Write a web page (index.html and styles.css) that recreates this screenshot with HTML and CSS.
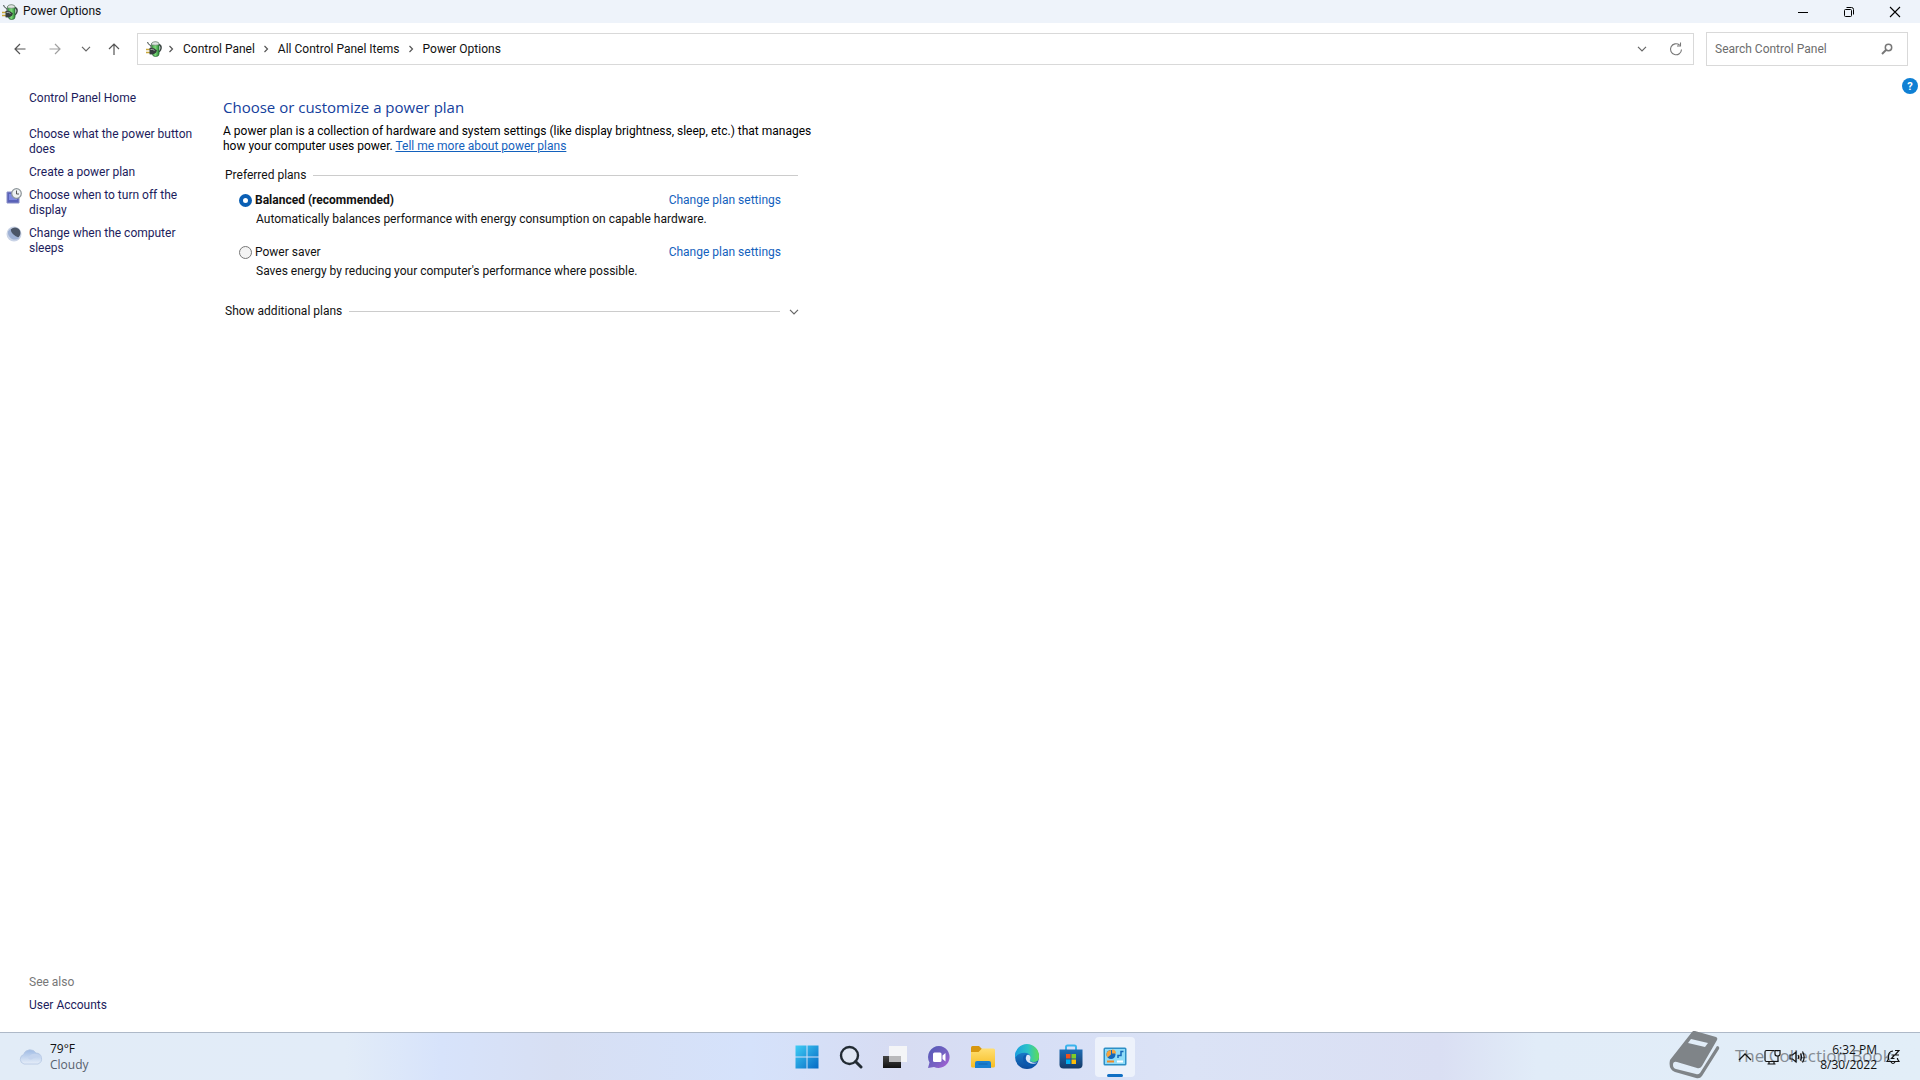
FILE: index.html
```html
<!DOCTYPE html>
<html lang="en">
<head>
<meta charset="utf-8">
<title>Power Options</title>
<link rel="stylesheet" href="styles.css">
</head>
<body>
<svg class="defs" aria-hidden="true">
  <defs>
    <linearGradient id="bat" x1="0" x2="1"><stop offset="0" stop-color="#3c9a40"/><stop offset=".5" stop-color="#7edc7a"/><stop offset="1" stop-color="#2a8a36"/></linearGradient>
    <linearGradient id="win" x1="0" y1="0" x2="1" y2="1"><stop offset="0" stop-color="#3fcdf5"/><stop offset="1" stop-color="#0669c4"/></linearGradient>
    <linearGradient id="chat" x1="0" y1="0" x2="1" y2="1"><stop offset="0" stop-color="#5059b5"/><stop offset=".6" stop-color="#7a62c4"/><stop offset="1" stop-color="#b05fd8"/></linearGradient>
    <linearGradient id="fold" x1="0" y1="0" x2="0" y2="1"><stop offset="0" stop-color="#ffdf73"/><stop offset="1" stop-color="#f7bd22"/></linearGradient>
    <linearGradient id="edge1" x1="0" y1="0" x2="1" y2="0"><stop offset="0" stop-color="#199fe0"/><stop offset=".55" stop-color="#2cc4c6"/><stop offset="1" stop-color="#5fdc56"/></linearGradient>
    <linearGradient id="edge2" x1="0" y1="0" x2="0" y2="1"><stop offset="0" stop-color="#1c8fdc"/><stop offset="1" stop-color="#0c4b9c"/></linearGradient>
    <linearGradient id="store" x1="0" y1="0" x2="0" y2="1"><stop offset="0" stop-color="#1d6db5"/><stop offset="1" stop-color="#153a68"/></linearGradient>
    <linearGradient id="cloud" x1="0" y1="0" x2="0" y2="1"><stop offset="0" stop-color="#9fbbe4"/><stop offset="1" stop-color="#e6eef9"/></linearGradient>
    <linearGradient id="dark" x1="0" y1="0" x2="0" y2="1"><stop offset="0" stop-color="#444"/><stop offset="1" stop-color="#111"/></linearGradient>
    <symbol id="power" viewBox="0 0 16 16">
      <path d="M12.500 3.500Q15.500 4 15 7.500Q14.500 11 10 12" fill="none" stroke="#3d4745" stroke-width="1.500"/>
      <path d="M5.500 3 Q5.500 1 9.500 1 Q13 1 13 3 V13 Q13 15.500 9.500 15.500 Q6.500 15.500 6.500 13Z" fill="url(#bat)" stroke="#2f6a3a" stroke-width=".8"/>
      <path d="M5.500 3Q5.500 .8 9.300 .8Q13 .8 13 3Q13 4.200 9.300 4.200Q5.500 4.200 5.500 3Z" fill="#dfe6e2" stroke="#6b7772" stroke-width=".6"/>
      <path d="M1.500 1Q2 3.500 4.500 4.500Q5.500 5.500 5 7" fill="none" stroke="#5c6663" stroke-width="1.200"/>
      <path d="M0 8.500H4M0 11.500H4" stroke="#c8a83c" stroke-width="1.300"/>
      <path d="M3.500 7 Q8 6 11 9.500 Q9.500 14 3.500 13.300Z" fill="#363e3e"/>
      <path d="M4.500 8.500Q7 7.800 8.500 9.500" stroke="#a4afaa" fill="none"/>
    </symbol>
    <symbol id="crumb" viewBox="0 0 6 8"><path d="M1.500 1 L4.500 4 L1.500 7" fill="none" stroke="#555" stroke-width="1.200"/></symbol>
    <symbol id="down" viewBox="0 0 10 6"><path d="M1 .8 L5 4.800 L9 .8" fill="none" stroke="currentColor" stroke-width="1.200"/></symbol>
  </defs>
</svg>
<div class="screen">
  <header class="titlebar">
    <svg class="ico16"><use href="#power"/></svg>
    <span class="title">Power Options</span>
    <button class="winbtn" aria-label="Minimize"><svg width="12" height="12"><path d="M1 6.500H11" stroke="#000" /></svg></button>
    <button class="winbtn" aria-label="Restore"><svg width="12" height="12" fill="none" stroke="#000"><rect x="1.500" y="3.500" width="7" height="7" rx="1"/><path d="M3.500 1.500H8.500Q10.500 1.500 10.500 3.500V8.500"/></svg></button>
    <button class="winbtn" aria-label="Close"><svg width="12" height="12"><path d="M1 1L11 11M11 1L1 11" stroke="#000" stroke-width="1.100"/></svg></button>
  </header>

  <nav class="toolbar" aria-label="Navigation">
    <div class="history">
      <button aria-label="Back"><svg width="12" height="12" fill="none" stroke="#555" stroke-width="1.200"><path d="M11.500 6H1M6 1L1 6L6 11"/></svg></button>
      <button aria-label="Forward"><svg width="12" height="12" fill="none" stroke="#a0a0a0" stroke-width="1.200"><path d="M.5 6H11M6 1L11 6L6 11"/></svg></button>
      <button class="narrow" aria-label="Recent locations"><svg class="chev"><use href="#down"/></svg></button>
      <button class="up" aria-label="Up"><svg width="12" height="12" fill="none" stroke="#555" stroke-width="1.200"><path d="M6 12V1M1 6L6 1L11 6"/></svg></button>
    </div>
    <div class="address">
      <svg class="ico16"><use href="#power"/></svg>
      <svg class="crumb"><use href="#crumb"/></svg>
      <a href="#">Control Panel</a>
      <svg class="crumb"><use href="#crumb"/></svg>
      <a href="#">All Control Panel Items</a>
      <svg class="crumb"><use href="#crumb"/></svg>
      <a href="#">Power Options</a>
      <button class="prev" aria-label="Previous locations"><svg class="chev"><use href="#down"/></svg></button>
      <button aria-label="Refresh"><svg width="14" height="14" fill="none" stroke="#777" stroke-width="1.100"><path d="M12.500 7.500A5.500 5.500 0 1 1 10.500 3M11.500 .5V4H8"/></svg></button>
    </div>
    <form class="search">
      <input type="text" placeholder="Search Control Panel" aria-label="Search Control Panel">
      <button type="button" aria-label="Search"><svg width="12" height="12" fill="none" stroke="#777"><circle cx="7.500" cy="4.500" r="3.200" stroke-width="1.500"/><path d="M5 7L1 11" stroke-width="2"/></svg></button>
    </form>
  </nav>

  <div class="body">
    <aside class="side">
      <a class="home" href="#">Control Panel Home</a>
      <ul class="tasks">
        <li><a href="#">Choose what the power button does</a></li>
        <li><a href="#">Create a power plan</a></li>
        <li><svg class="ico16" viewBox="0 0 16 16"><path d="M1 4H13V15H1Z" fill="#5a62b8" stroke="#8a90c8"/><path d="M3 6H11V12H3Z" fill="#7f8ae0"/><circle cx="10.500" cy="5.500" r="4.800" fill="#eef1f2" stroke="#8c9499" stroke-width="1.200"/><path d="M10.500 2.500V6H13" fill="none" stroke="#555"/></svg><a href="#">Choose when to turn off the display</a></li>
        <li><svg class="ico16" viewBox="0 0 16 16"><circle cx="8" cy="8" r="7.500" fill="#c9d3e6"/><circle cx="9" cy="7" r="5.500" fill="#4b5668"/><path d="M4.500 2.500Q5 9 13.500 12Q10 14.500 6 13Q1.500 10 2 5.500Z" fill="#9db0d4"/></svg><a href="#">Change when the computer sleeps</a></li>
      </ul>
      <div class="seealso">
        <span>See also</span>
        <a href="#">User Accounts</a>
      </div>
    </aside>

    <main class="content">
      <h1>Choose or customize a power plan</h1>
      <p class="intro">A power plan is a collection of hardware and system settings (like display brightness, sleep, etc.) that manages how your computer uses power. <a href="#">Tell me more about power plans</a></p>
      <section class="group">
        <h2>Preferred plans</h2>
        <div class="plan">
          <div class="row">
            <input type="radio" name="plan" id="balanced" checked>
            <label class="strong" for="balanced">Balanced (recommended)</label>
            <a href="#">Change plan settings</a>
          </div>
          <p>Automatically balances performance with energy consumption on capable hardware.</p>
        </div>
        <div class="plan">
          <div class="row">
            <input type="radio" name="plan" id="saver">
            <label for="saver">Power saver</label>
            <a href="#">Change plan settings</a>
          </div>
          <p>Saves energy by reducing your computer's performance where possible.</p>
        </div>
      </section>
      <button class="more"><span>Show additional plans</span><svg class="chev"><use href="#down"/></svg></button>
    </main>
    <button class="help" aria-label="Help">?</button>
  </div>

  <footer class="taskbar">
    <button class="weather">
      <svg width="26" height="18" viewBox="0 0 26 18"><path d="M6 16 A5 5 0 0 1 5.500 6.500 A7 7 0 0 1 18 5 A5.700 5.700 0 0 1 20 16Z" fill="url(#cloud)" stroke="#b4c6e2" stroke-width=".8"/><path d="M10 10Q13 5 18 6Q22 6 24 10Q20 7 16 10Q12 13 10 10Z" fill="#c4d4ee"/></svg>
      <span class="stack"><span>79°F</span><span class="dim">Cloudy</span></span>
    </button>
    <div class="apps">
      <button aria-label="Start"><svg width="24" height="24" fill="url(#win)"><path d="M.5 .5H11.500V11.500H.5ZM12.500 .5H23.500V11.500H12.500ZM.5 12.500H11.500V23.500H.5ZM12.500 12.500H23.500V23.500H12.500Z"/></svg></button>
      <button aria-label="Search"><svg width="24" height="24" fill="none" stroke="#222b33"><circle cx="10.500" cy="10.500" r="8.500" fill="#dfe6f3" stroke-width="2.400"/><path d="M16.500 16.500L22 22" stroke-width="3" stroke-linecap="round"/></svg></button>
      <button aria-label="Task view"><svg width="26" height="24"><path d="M1 11H19V23H1Z" fill="url(#dark)"/><path d="M7 1H25V17H7Z" fill="#f7f7f7" fill-opacity=".9"/><path d="M7 11H19V17H7Z" fill="#b9b9bb"/></svg></button>
      <button aria-label="Chat"><svg width="24" height="24"><path d="M12 1A11 11 0 1 1 7 22L1 23L2.500 17.500A11 11 0 0 1 12 1Z" fill="url(#chat)"/><rect x="6" y="7.500" width="8.500" height="9.500" rx="1.500" fill="#fff"/><path d="M15.500 10.500L18.500 8V16.500L15.500 14Z" fill="#fff"/></svg></button>
      <button aria-label="File Explorer"><svg width="26" height="24"><path d="M1 2.500Q1 1 2.500 1H9L12 4V8H1Z" fill="#d8970f"/><path d="M1 7H8.500L12 3.500H23.500Q25 3.500 25 5V21Q25 22.500 23.500 22.500H2.500Q1 22.500 1 21Z" fill="url(#fold)"/><path d="M5 23V18Q5 16 7 16H19Q21 16 21 18V23Z" fill="#1a7fd0"/><path d="M8.500 19H17.500" stroke="#1364ad" stroke-width="1"/></svg></button>
      <button aria-label="Edge"><svg width="26" height="26" viewBox="0 0 26 26"><circle cx="13" cy="13" r="12" fill="url(#edge2)"/><path d="M1 12A12 12 0 0 1 25 12Q25.500 18 19.500 18Q15.500 18 15.500 15.800Q17 14.500 16.500 12.500Q15.500 9 10.500 8.800Q4 8.800 1 14Z" fill="url(#edge1)"/><path d="M9 14Q8.500 22 17 23Q21 22.500 23.500 19Q20 21 16 20Q12 18.500 11.500 14.500Q11.500 11.500 13 10.500Q9.500 10.500 9 14Z" fill="#0d59ae"/><path d="M12.500 11.500Q10.500 16 14.500 18.500Q19 21 23.500 18.500Q19.500 19.500 16.500 17.800Q15 16.500 16.300 15Q17.300 12.500 15 11Q13.500 10.500 12.500 11.500Z" fill="#dce6f7"/></svg></button>
      <button aria-label="Microsoft Store"><svg width="24" height="26"><path d="M7 6V3Q7 1.500 8.500 1.500H15.500Q17 1.500 17 3V6" fill="none" stroke="#3bb3ec" stroke-width="2"/><path d="M.5 5.500H23.500V20.500Q23.500 24.500 19.500 24.500H4.500Q.5 24.500 .5 20.500Z" fill="url(#store)"/><path d="M7 10H11.500V14.500H7Z" fill="#f1511b"/><path d="M12.500 10H17V14.500H12.500Z" fill="#80cc28"/><path d="M7 15.500H11.500V20H7Z" fill="#00adef"/><path d="M12.500 15.500H17V20H12.500Z" fill="#fbbc09"/></svg></button>
      <button class="active" aria-label="Control Panel"><svg width="24" height="20"><rect x=".5" y=".5" width="23" height="18" rx="1.500" fill="#2d8fc6"/><rect x="2" y="2" width="20" height="15" fill="#8fdcf8"/><circle cx="8" cy="7.500" r="4.500" fill="#1566b8"/><path d="M8 7.500V3A4.500 4.500 0 0 0 4.500 10.500Z" fill="#f6a33c"/><path d="M9 6.500V2.500A4 4 0 0 1 13 6.500Z" fill="#f6a33c"/><path d="M4 14.500H11" stroke="#f08a24" stroke-width="2"/><path d="M14 14.500H20" stroke="#fff" stroke-width="2"/><path d="M15 11V8.500H18V4.500H20.500" fill="none" stroke="#1566b8" stroke-width="1.500"/></svg></button>
    </div>
    <div class="tray">
      <button aria-label="Show hidden icons"><svg width="14" height="8"><path d="M1 7L7 1L13 7" fill="none" stroke="#111" stroke-width="1.300"/></svg></button>
      <button class="status" aria-label="Network and volume">
        <svg width="17" height="16" fill="none" stroke="#111" stroke-width="1.200"><path d="M10 1.500H2.500Q1 1.500 1 3V11Q1 12.500 2.500 12.500H14V7M5 12.500V15M10 12.500V15M3.500 15H11.500"/><path d="M11 1.500H16V5Q16 7 13.500 7Q11 7 11 5Z"/></svg>
        <svg width="17" height="14" fill="none" stroke="#111" stroke-width="1.200"><path d="M1 5H3.500L7 2V12L3.500 9H1ZM9 5Q10.200 7 9 9M11.500 3.500Q13.500 7 11.500 10.500M13.500 1.500Q16.800 7 13.500 12.500"/></svg>
      </button>
      <button class="stack clock"><time>6:32 PM</time><span>8/30/2022</span></button>
      <button aria-label="Notifications"><svg width="14" height="16" fill="none" stroke="#111" stroke-width="1.200"><path d="M7 2Q2.500 2.500 2.500 7V10L1 12.500H13L11.500 10V9M5 13Q7 16 9 13M9 1.500H13L9 6H13M5.500 6H8.500L5.500 9.500H8.500"/></svg></button>
      <div class="mark">
        <svg width="52" height="48" viewBox="0 0 52 48"><path fill="#7f8488" fill-rule="evenodd" d="M23 1Q24 -.5 26 0L47 6Q49 7 48 9L33 35Q31 38 28 37L8 31Q4 30 4 34Q4 37 7 38L27 43Q29 44 31 42L48 15Q51 15 50 18L33 45Q31 48 27 47L6 41Q-1 38 1 29ZM22 8L19 12L36 16L39 12Z"/></svg>
        <span>The Collection Book</span>
      </div>
    </div>
  </footer>
</div>
</body>
</html>
```
FILE: styles.css
```css
* { box-sizing: border-box; margin: 0; padding: 0; }

body {
  background: #fff;
  color: #111;
  font-family: Roboto, "Open Sans", sans-serif;
  font-size: 12px;
  line-height: 15px;
}

button { background: none; border: 0; color: inherit; font: inherit; display: flex; align-items: center; justify-content: center; }
a { color: inherit; text-decoration: none; }
svg { flex: none; display: block; }
.defs { position: absolute; width: 0; height: 0; }
.ico16 { width: 16px; height: 16px; }
.chev { width: 10px; height: 6px; color: #666; }

.screen { display: flex; flex-direction: column; min-height: 100vh; }

.titlebar { display: flex; align-items: center; height: 23px; padding: 0 2px; background: #eef3fa; }
.title { flex: 1; margin-left: 5px; }
.winbtn { width: 46px; height: 20px; }

.toolbar { display: flex; align-items: center; gap: 12px; height: 52px; padding: 0 12px 0 9px; }
.history { display: flex; width: 116px; }
.history button { width: 24px; height: 24px; margin-right: 12px; }
.history .narrow { width: 16px; margin-right: 9px; }
.history .up { margin-right: 0; }
.address { flex: 1; display: flex; align-items: center; height: 32px; padding: 0 9px 0 8px; border: 1px solid #d9d9d9; }
.address .crumb { width: 6px; height: 8px; margin: 0 9px 0 8px; }
.address .ico16 + .crumb { margin-left: 6px; }
.address button { width: 16px; height: 24px; }
.address .prev { margin-left: auto; margin-right: 18px; }
.search { display: flex; align-items: center; width: 202px; height: 34px; padding: 0 14px 0 8px; border: 1px solid #d9d9d9; }
.search input { flex: 1; min-width: 0; border: 0; outline: 0; background: none; font: inherit; }
.search input::placeholder { color: #6d6d6d; opacity: 1; }

.body { flex: 1; display: flex; align-items: flex-start; }
.side { align-self: stretch; display: flex; flex-direction: column; width: 200px; padding: 16px 0 19px 6px; color: #1c1c5c; }
.home { margin: 0 0 21px 23px; }
.tasks { list-style: none; display: flex; flex-direction: column; gap: 8px; }
.tasks li { display: flex; gap: 7px; }
.tasks a { width: 170px; }
.tasks li > a:first-child { margin-left: 23px; }
.seealso { display: flex; flex-direction: column; gap: 8px; margin-top: auto; padding-left: 23px; }
.seealso span { color: #777; }

.content { width: 620px; padding: 21px 0 0 23px; }
.content h1 { color: #14409c; font-family: "Open Sans", "Noto Sans", sans-serif; font-size: 15px; font-weight: 400; line-height: 22px; }
.intro { margin-top: 6px; color: #000; }
.content a { color: #1361bd; }
.intro a { text-decoration: underline; }
.group { margin-top: 14px; }
.group h2, .more { display: flex; align-items: center; gap: 7px; width: 578px; padding: 0 3px 0 2px; font-size: 12px; font-weight: 400; }
.group h2::after, .more span::after { content: ""; flex: 1; height: 1px; background: #ccc; }
.plan { width: 581px; margin-bottom: 18px; padding: 10px 23px 0 16px; }
.plan + .plan { padding-top: 0; }
.row { display: flex; align-items: center; gap: 3px; }
.row a { margin-left: auto; }
.row input { appearance: none; width: 13px; height: 13px; border: 1px solid #777; border-radius: 50%; background: #f3f3f3; }
.row input:checked { border: 4px solid #0a5fb4; background: #fff; }
.strong { font-weight: 700; }
.plan p { margin: 4px 0 0 17px; white-space: nowrap; }
.more { margin-top: 25px; gap: 9px; padding-right: 2px; }
.more span { flex: 1; display: flex; align-items: center; gap: 7px; }
.help { width: 16px; height: 16px; margin: 3px 2px 0 auto; border-radius: 50%; background: #0f80d4; color: #fff; font-size: 11px; font-weight: 700; }

.taskbar { display: grid; grid-template-columns: 1fr auto 1fr; align-items: center; height: 48px; border-top: 1px solid #aeb9c8; background: linear-gradient(90deg, #e2ecf7 0, #e2ecf8 18%, #d7e3fb 23%, #d7dff3 29%, #d5e2fb 39%, #d7dcf2 47%, #d7dff6 54%, #dbe3f6 62%, #dadff3 75%, #e1ecf8 80%, #e2eef8 100%); font-family: "Open Sans", "Noto Sans", sans-serif; }
.weather { justify-self: start; gap: 6px; margin-left: 18px; }
.stack { display: flex; flex-direction: column; align-items: flex-start; line-height: 16px; }
.dim { color: #58616d; }
.apps { display: flex; gap: 4px; padding-left: 1px; }
.apps button { position: relative; width: 40px; height: 40px; border-radius: 4px; }
.apps .active { background: #edf2fb; }
.apps .active::after { content: ""; position: absolute; bottom: 0; left: 12px; width: 16px; height: 3px; border-radius: 2px; background: #0f6fc4; }
.tray { position: relative; justify-self: end; display: flex; align-items: center; height: 47px; padding-right: 20px; }
.tray > button { z-index: 1; }
.tray .status { gap: 8px; margin: 0 0 0 12px; }
.tray .clock { width: 71px; align-items: flex-end; margin-right: 9px; line-height: 15px; }
.mark { position: absolute; left: -69px; top: -2px; display: flex; align-items: center; gap: 14px; height: 48px; color: #858c94; font-size: 17px; white-space: nowrap; }
```
